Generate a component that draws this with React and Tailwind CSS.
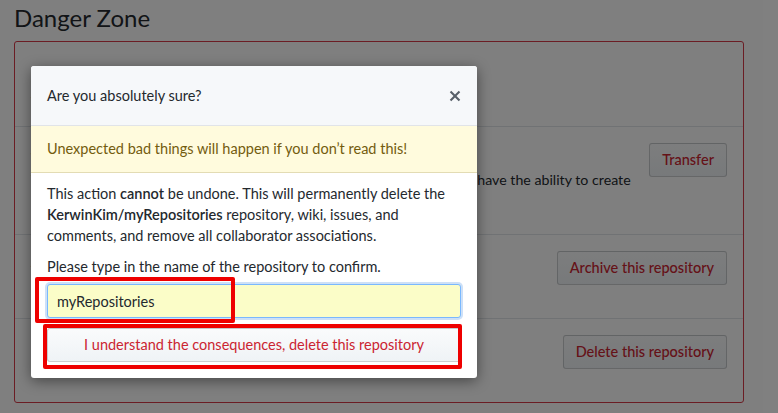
const XIcon = () => (
  <svg width="12" height="16" viewBox="0 0 12 16" className="fill-current">
    <path d="M7.48 8l3.75 3.75-1.48 1.48L6 9.48l-3.75 3.75-1.48-1.48L4.52 8 .77 4.25l1.48-1.48L6 6.52l3.75-3.75 1.48 1.48L7.48 8z" />
  </svg>
)

function DangerButton({ children }) {
  return (
    <button className="shrink-0 rounded-[3px] border border-[#1b1f2333] bg-gradient-to-b from-[#fafbfc] to-[#eff3f6] px-3 py-[6px] text-[14.5px] font-medium leading-5 text-[#cb2431]">
      {children}
    </button>
  )
}

export default function App() {
  return (
    <div className="relative h-[413px] w-[778px] overflow-hidden bg-white font-['Lato','Noto_Sans',sans-serif] text-[#24292e]">
      {/* page behind the dialog */}
      <div className="px-[14px]">
        <h2 className="pt-[1px] text-[24px] leading-[34px]">Danger Zone</h2>
        <div className="mt-[6px] flex h-[362px] w-[730px] flex-col rounded-[3px] border border-[#d73a49]">
          <div className="flex h-[84px] items-center justify-between px-4 pt-4 text-[14.5px] leading-[21px]">
            <div>
              <div className="font-semibold">Change repository visibility</div>
              <div>This repository is currently public.</div>
            </div>
          </div>
          <div className="flex h-[108px] items-start justify-between border-t border-[#e1e4e8] p-4 text-[14.5px] leading-[21px]">
            <div className="whitespace-nowrap pt-[5px]">
              <div className="font-semibold">Transfer ownership</div>
              <div className="text-[14.2px]">
                Transfer this repository to another user or to an organization where you have the ability to create
                <br />
                repositories.
              </div>
            </div>
            <DangerButton>Transfer</DangerButton>
          </div>
          <div className="flex h-[84px] items-start justify-between border-t border-[#e1e4e8] p-4 text-[14.5px] leading-[21px]">
            <div>
              <div className="font-semibold">Archive this repository</div>
              <div>Mark this repository as archived and read-only.</div>
            </div>
            <DangerButton>Archive this repository</DangerButton>
          </div>
          <div className="flex flex-1 items-start justify-between border-t border-[#e1e4e8] p-4 text-[14.5px] leading-[21px]">
            <div>
              <div className="font-semibold">Delete this repository</div>
              <div>Once you delete a repository, there is no going back.</div>
            </div>
            <DangerButton>Delete this repository</DangerButton>
          </div>
        </div>
      </div>

      {/* backdrop */}
      <div className="absolute inset-0 bg-black/50" />

      {/* dialog */}
      <div className="absolute left-[31px] top-[66px] w-[446px] overflow-hidden rounded-[3px] bg-white shadow-[0_3px_14px_rgba(0,0,0,0.45)]">
        <div className="flex h-[60px] items-center justify-between border-b border-[#e1e4e8] bg-[#f6f8fa] px-4 text-[14.5px]">
          <span>Are you absolutely sure?</span>
          <span className="text-[#586069]"><XIcon /></span>
        </div>
        <div className="flex h-[47px] items-center border-b border-[#e3dcb4] bg-[#fffbdd] px-4 text-[14.5px] text-[#735c0f]">
          Unexpected bad things will happen if you don’t read this!
        </div>
        <div className="px-4 pb-4 pt-[10px] text-[14.5px] leading-[21px]">
          <p className="mb-[10px] whitespace-nowrap">
            This action <strong className="font-semibold">cannot</strong> be undone. This will permanently delete the
            <br />
            <strong className="font-semibold">KerwinKim/myRepositories</strong> repository, wiki, issues, and
            <br />
            comments, and remove all collaborator associations.
          </p>
          <p className="mb-[7px]">Please type in the name of the repository to confirm.</p>
          <input
            readOnly
            value="myRepositories"
            className="block h-[34px] w-full rounded-[3px] border border-[#79b8ff] bg-[#fbfdc8] px-[9px] text-[14.5px] text-[#24292e] shadow-[0_0_0_2px_rgba(3,102,214,0.2)] outline-none"
          />
          <button className="mt-[10px] block h-[34px] w-full rounded-[3px] border border-[#1b1f2333] bg-gradient-to-b from-[#fafbfc] to-[#eff3f6] text-[14.5px] leading-5 text-[#cb2431]">
            I understand the consequences, delete this repository
          </button>
        </div>
      </div>

      {/* red annotation boxes */}
      <div className="absolute left-[35px] top-[277px] h-[46px] w-[200px] rounded-[2px] border-4 border-[#ee0000]" />
      <div className="absolute left-[43px] top-[324px] h-[45px] w-[419px] rounded-[2px] border-4 border-[#ee0000]" />
    </div>
  )
}
